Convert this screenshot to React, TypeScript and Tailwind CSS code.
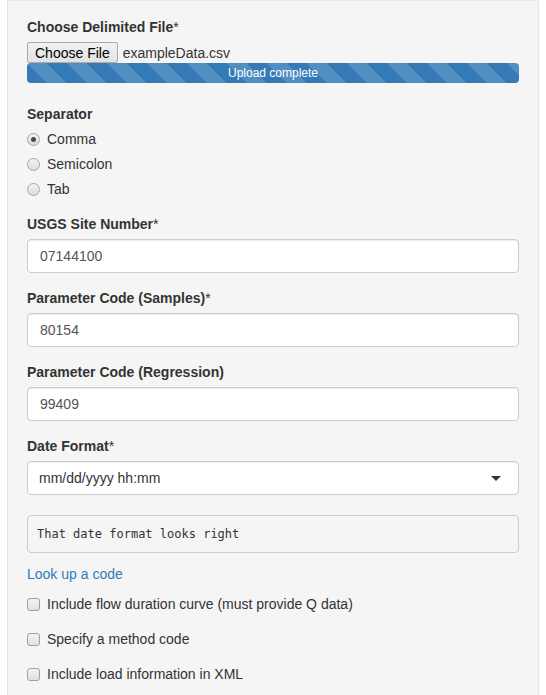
import React from 'react';

function Label({ text, required, className = '' }: { text: string; required?: boolean; className?: string }) {
  return (
    <div className={`h-[20px] font-bold ${className}`}>
      {text}
      {required && <span className="font-normal">*</span>}
    </div>
  );
}

function TextInput({ value }: { value: string }) {
  return (
    <div className="mt-[5px] flex h-[34px] items-center rounded-[4px] border border-[#cccccc] bg-white px-[12px] text-[#555555] shadow-[inset_0_1px_1px_rgba(0,0,0,0.075)]">
      {value}
    </div>
  );
}

function Radio({ label, checked, className = '' }: { label: string; checked?: boolean; className?: string }) {
  return (
    <div className={`flex h-[20px] items-center ${className}`}>
      <span className="flex h-[13px] w-[13px] items-center justify-center rounded-full border border-[#a6a6a6] bg-[linear-gradient(#f4f4f4,#dcdcdc)]">
        {checked && <span className="h-[5px] w-[5px] rounded-full bg-[#4a4a4a]" />}
      </span>
      <span className="ml-[7px]">{label}</span>
    </div>
  );
}

function Checkbox({ label, className = '' }: { label: string; className?: string }) {
  return (
    <div className={`flex h-[20px] items-center ${className}`}>
      <span className="h-[13px] w-[13px] rounded-[3px] border border-[#a0a0a0] bg-[linear-gradient(#f3f3f3,#e0e0e0)]" />
      <span className="ml-[7px]">{label}</span>
    </div>
  );
}

export default function App() {
  return (
    <div className="h-[695px] overflow-hidden bg-white font-['Liberation_Sans',Arial,sans-serif] text-[14px] leading-[20px] text-[#333333]">
      <div className="ml-[7px] w-[532px] border-x border-b border-[#e3e3e3] bg-[#f5f5f5] px-[19px] pt-[17px] pb-[40px] shadow-[inset_0_1px_1px_rgba(0,0,0,0.05)]">
        <Label text="Choose Delimited File" required />

        {/* file picker + progress */}
        <div className="mt-[5px] flex h-[21px] items-center">
          <span className="flex h-[21px] items-center rounded-[2px] border border-[#adadad] bg-[linear-gradient(#f2f2f2,#e2e2e2)] px-[7px] text-black">
            Choose File
          </span>
          <span className="ml-[5px]">exampleData.csv</span>
        </div>
        <div className="flex h-[20px] items-center justify-center rounded-[4px] bg-[#337ab7] bg-[linear-gradient(45deg,rgba(255,255,255,.15)_25%,transparent_25%,transparent_50%,rgba(255,255,255,.15)_50%,rgba(255,255,255,.15)_75%,transparent_75%,transparent)] bg-[length:40px_40px] text-[12px] text-white">
          Upload complete
        </div>

        <Label text="Separator" className="mt-[21px]" />
        <Radio label="Comma" checked className="mt-[5px]" />
        <Radio label="Semicolon" className="mt-[5px]" />
        <Radio label="Tab" className="mt-[5px]" />

        <Label text="USGS Site Number" required className="mt-[15px]" />
        <TextInput value="07144100" />

        <Label text="Parameter Code (Samples)" required className="mt-[15px]" />
        <TextInput value="80154" />

        <Label text="Parameter Code (Regression)" className="mt-[15px]" />
        <TextInput value="99409" />

        <Label text="Date Format" required className="mt-[15px]" />
        <div className="mt-[5px] flex h-[34px] items-center justify-between rounded-[4px] border border-[#cccccc] bg-white pl-[11px] pr-[17px] shadow-[inset_0_1px_1px_rgba(0,0,0,0.075)]">
          <span>mm/dd/yyyy hh:mm</span>
          <span className="h-0 w-0 border-x-[5px] border-t-[5px] border-x-transparent border-t-[#333333]" />
        </div>

        <div className="mt-[20px] rounded-[4px] border border-[#cccccc] bg-[#f5f5f5] px-[9px] py-[9px] font-['DejaVu_Sans_Mono',monospace] text-[12px] leading-[18px]">
          That date format looks right
        </div>

        <div className="mt-[11px] h-[20px] text-[#337ab7]">Look up a code</div>

        <Checkbox label="Include flow duration curve (must provide Q data)" className="mt-[10px]" />
        <Checkbox label="Specify a method code" className="mt-[15px]" />
        <Checkbox label="Include load information in XML" className="mt-[15px]" />
      </div>
    </div>
  );
}
